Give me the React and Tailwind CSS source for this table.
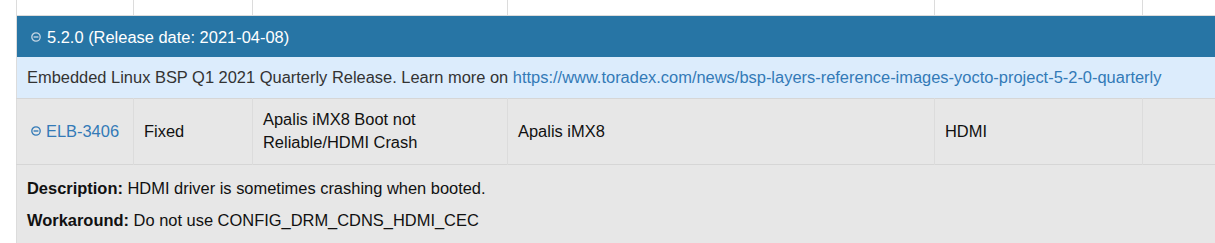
const MinusCircle = ({ className }) => (
  <svg viewBox="0 0 10 10" className={className} fill="none" stroke="currentColor">
    <circle cx="5" cy="5" r="4.2" strokeWidth="1.3" />
    <line x1="2.6" y1="5" x2="7.4" y2="5" strokeWidth="1.4" />
  </svg>
);

const cell = 'border-r border-[#dcdcdc] align-middle';

export default function App() {
  return (
    <div className="bg-white pl-[16px] font-['Liberation_Sans',Arial,sans-serif] text-[16.45px] w-[1215px] h-[243px] overflow-hidden">
      <table className="w-[1199px] table-fixed border-collapse border-l border-[#dcdcdc]">
        <colgroup>
          <col className="w-[117px]" />
          <col className="w-[119px]" />
          <col className="w-[255px]" />
          <col className="w-[427px]" />
          <col className="w-[208px]" />
          <col />
        </colgroup>
        <tbody>
          <tr className="h-[15px] border-b border-[#dcdcdc]">
            <td className={cell}></td>
            <td className={cell}></td>
            <td className={cell}></td>
            <td className={cell}></td>
            <td className={cell}></td>
            <td></td>
          </tr>
          <tr className="bg-[#2775a5] text-white">
            <td colSpan={6} className="h-[42px] pl-[14px] align-middle">
              <span className="inline-flex items-center gap-[6px] leading-[22px]">
                <MinusCircle className="w-[10px] h-[10px] text-[#c5d5e3]" />
                5.2.0 (Release date: 2021-04-08)
              </span>
            </td>
          </tr>
          <tr className="bg-[#dcecfc] text-[#333] border-b border-[#d6d6d6]">
            <td colSpan={6} className="h-[41px] px-[10px] align-middle leading-[22px]">
              Embedded Linux BSP Q1 2021 Quarterly Release. Learn more on{' '}
              <a href="#" className="text-[#337ab7]">
                https://www.toradex.com/news/bsp-layers-reference-images-yocto-project-5-2-0-quarterly
              </a>
            </td>
          </tr>
          <tr className="bg-[#e7e7e7] text-[#111] border-b border-[#d6d6d6] leading-[23px]">
            <td className={`${cell} h-[65px] text-center`}>
              <a href="#" className="inline-flex items-center gap-[5px] text-[#337ab7]">
                <MinusCircle className="w-[10px] h-[10px]" />
                ELB-3406
              </a>
            </td>
            <td className={`${cell} px-[10px]`}>Fixed</td>
            <td className={`${cell} px-[10px] pt-[9px] pb-[10px]`}>
              Apalis iMX8 Boot not Reliable/HDMI Crash
            </td>
            <td className={`${cell} px-[10px]`}>Apalis iMX8</td>
            <td className={`${cell} px-[10px]`}>HDMI</td>
            <td></td>
          </tr>
          <tr className="bg-[#e7e7e7] text-[#111]">
            <td colSpan={6} className="h-[90px] px-[10px] pt-[12px] align-top leading-[22px]">
              <p>
                <b>Description:</b> HDMI driver is sometimes crashing when booted.
              </p>
              <p className="mt-[10px]">
                <b>Workaround:</b> Do not use CONFIG_DRM_CDNS_HDMI_CEC
              </p>
            </td>
          </tr>
        </tbody>
      </table>
    </div>
  );
}
